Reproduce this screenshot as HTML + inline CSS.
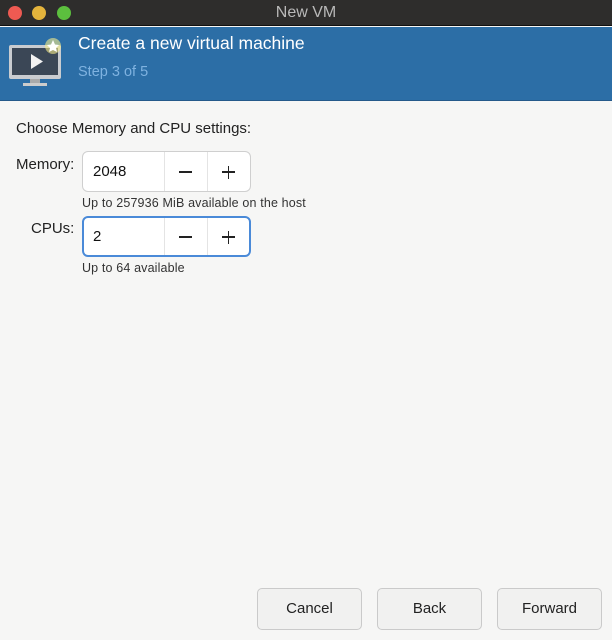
<!DOCTYPE html>
<html><head><style>
*{margin:0;padding:0;box-sizing:border-box}
body{width:612px;height:640px;background:#f6f6f5;font-family:"Liberation Sans",sans-serif;position:relative;overflow:hidden}
.tb{position:absolute;left:0;top:0;width:612px;height:26px;background:#2e2d2c;border-bottom:1px solid #111}
.dot{position:absolute;top:6px;width:14px;height:14px;border-radius:50%}
.title{position:absolute;top:4px;left:0;width:612px;text-align:center;color:#b9b9b9;font-size:16px}
.hd{position:absolute;left:0;top:27px;width:612px;height:74px;background:#2c6ea6;border-bottom:1px solid #25598a}
.h1{position:absolute;left:78px;top:33px;color:#fff;font-size:17.5px}
.h2{position:absolute;left:78px;top:64px;color:#7fb2e0;font-size:14.5px}
.t{position:absolute;color:#222;font-size:15px}
.s{position:absolute;color:#333;font-size:12.5px;letter-spacing:.15px}
.box{position:absolute;left:82px;width:169px;height:41px;background:#fff;border:1px solid #cfcfcf;border-radius:6px}
.box .v{position:absolute;left:10px;top:11px;font-size:15px;color:#111}
.box .d1{position:absolute;left:81px;top:0;bottom:0;border-left:1px solid #e4e4e4}
.box .d2{position:absolute;left:124px;top:0;bottom:0;border-left:1px solid #e4e4e4}
.box .m{position:absolute;left:96px;top:19px;width:13px;height:1.8px;background:#222}
.box .p1{position:absolute;left:139px;top:19px;width:13px;height:1.8px;background:#222}
.box .p2{position:absolute;left:144.6px;top:13.5px;width:1.8px;height:13px;background:#222}
.btn{position:absolute;top:588px;width:105px;height:42px;background:#f1f1f0;border:1px solid #cacaca;border-radius:5px;text-align:center;line-height:40px;font-size:15px;color:#222}
</style></head><body>
<div class="tb"><div class="dot" style="left:8px;background:#ee5a52"></div><div class="dot" style="left:32px;background:#e4b43c"></div><div class="dot" style="left:57px;background:#5cbf3e"></div><div class="title">New VM</div></div>
<div class="hd"></div>
<svg style="position:absolute;left:8px;top:38px" width="58" height="50" viewBox="0 0 58 50">
<rect x="1" y="7" width="52" height="34" rx="2" fill="#c9ccd0"/>
<rect x="4" y="10" width="46" height="27" fill="#3b4756"/>
<polygon points="23,16 23,31 35,23.5" fill="#f2f2f2"/>
<rect x="22" y="41" width="10" height="4" fill="#aaa"/>
<rect x="15" y="45" width="24" height="3" fill="#ccc"/>
<circle cx="45" cy="8" r="8" fill="#f6ec8a" opacity=".6"/>
<polygon points="45,2 47,6.5 51,7 48,10 49,14 45,12 41,14 42,10 39,7 43,6.5" fill="#fff"/>
</svg>
<div class="h1">Create a new virtual machine</div>
<div class="h2">Step 3 of 5</div>
<div class="t" style="left:16px;top:120px">Choose Memory and CPU settings:</div>
<div class="t" style="left:16px;top:156px">Memory:</div>
<div class="box" style="top:151px"><span class="v">2048</span><div class="d1"></div><div class="d2"></div><div class="m"></div><div class="p1"></div><div class="p2"></div></div>
<div class="s" style="left:82px;top:196px">Up to 257936 MiB available on the host</div>
<div class="t" style="left:31px;top:220px">CPUs:</div>
<div class="box" style="top:216px;border:2px solid #4a8ad8"><span class="v" style="left:9px;top:10px">2</span><div class="d1" style="left:80px"></div><div class="d2" style="left:123px"></div><div class="m" style="left:95px;top:18px"></div><div class="p1" style="left:138px;top:18px"></div><div class="p2" style="left:143.6px;top:12.5px"></div></div>
<div class="s" style="left:82px;top:261px">Up to 64 available</div>
<div class="btn" style="left:257px">Cancel</div>
<div class="btn" style="left:377px">Back</div>
<div class="btn" style="left:497px">Forward</div>
</body></html>
